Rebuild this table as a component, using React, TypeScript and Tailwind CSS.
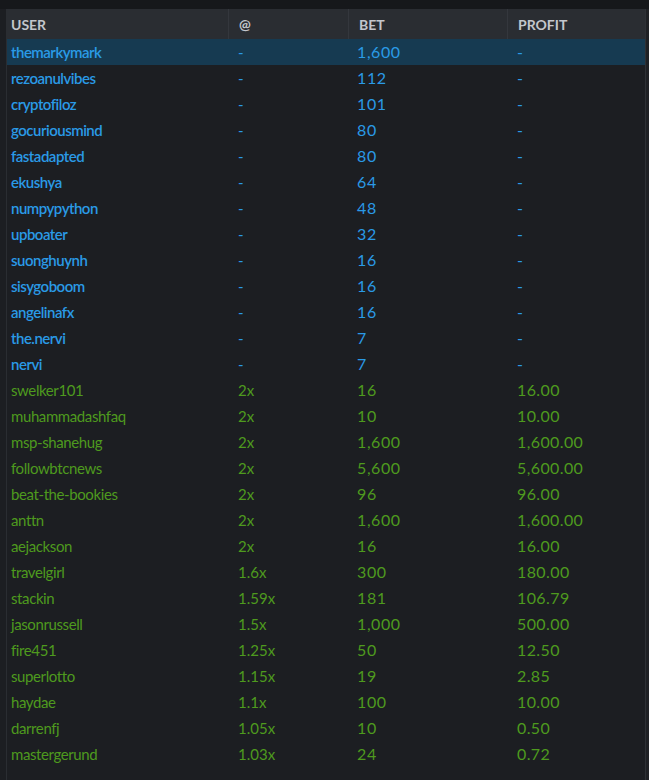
import React from "react";

type Row = { user: string; at: string; bet: string; profit: string; win: boolean };

const blue: [string, string][] = [
  ["themarkymark", "1,600"],
  ["rezoanulvibes", "112"],
  ["cryptofiloz", "101"],
  ["gocuriousmind", "80"],
  ["fastadapted", "80"],
  ["ekushya", "64"],
  ["numpypython", "48"],
  ["upboater", "32"],
  ["suonghuynh", "16"],
  ["sisygoboom", "16"],
  ["angelinafx", "16"],
  ["the.nervi", "7"],
  ["nervi", "7"],
];

const green: [string, string, string, string][] = [
  ["swelker101", "2x", "16", "16.00"],
  ["muhammadashfaq", "2x", "10", "10.00"],
  ["msp-shanehug", "2x", "1,600", "1,600.00"],
  ["followbtcnews", "2x", "5,600", "5,600.00"],
  ["beat-the-bookies", "2x", "96", "96.00"],
  ["anttn", "2x", "1,600", "1,600.00"],
  ["aejackson", "2x", "16", "16.00"],
  ["travelgirl", "1.6x", "300", "180.00"],
  ["stackin", "1.59x", "181", "106.79"],
  ["jasonrussell", "1.5x", "1,000", "500.00"],
  ["fire451", "1.25x", "50", "12.50"],
  ["superlotto", "1.15x", "19", "2.85"],
  ["haydae", "1.1x", "100", "10.00"],
  ["darrenfj", "1.05x", "10", "0.50"],
  ["mastergerund", "1.03x", "24", "0.72"],
];

const rows: Row[] = [
  ...blue.map(([user, bet]) => ({ user, at: "-", bet, profit: "-", win: false })),
  ...green.map(([user, at, bet, profit]) => ({ user, at, bet, profit, win: true })),
];

const App: React.FC = () => {
  return (
    <div className="w-[649px] h-[780px] bg-[#1c1e22] font-['Lato',sans-serif] overflow-hidden">
      <div className="h-[9px] bg-[#16181b]" />
      <div className="flex h-[771px]">
        <div className="w-[7px] border-r border-[#2a2d32]" />
        <div className="w-[638px]">
          <div className="grid grid-cols-[221px_120px_159px_138px] h-[30px] bg-[#2a2d32] text-[14px] font-bold text-[#c3c6cc]">
            <div className="pl-[4px] flex items-center">USER</div>
            <div className="pl-[10px] flex items-center border-l border-[#34373d]">@</div>
            <div className="pl-[10px] flex items-center border-l border-[#34373d]">BET</div>
            <div className="pl-[10px] flex items-center border-l border-[#34373d]">PROFIT</div>
          </div>
          {rows.map((r, i) => (
            <div
              key={r.user}
              className={`grid grid-cols-[221px_120px_159px_138px] h-[26px] items-center ${
                r.win ? "text-[#4e9a1e]" : "text-[#2a9ae6]"
              } ${i === 0 ? "bg-[#163a51]" : ""}`}
            >
              <div
                className={`pl-[4px] text-[15px] ${
                  r.win ? "tracking-[-0.4px]" : "font-semibold tracking-[-0.5px]"
                }`}
              >
                {r.user}
              </div>
              <div className="pl-[10px] text-[15px]">{r.at}</div>
              <div className="pl-[9px] text-[16px] tracking-[0.6px]">{r.bet}</div>
              <div className="pl-[10px] text-[16px] tracking-[0.4px]">{r.profit}</div>
            </div>
          ))}
        </div>
        <div className="w-[4px] border-l border-[#2e3136] bg-[#1f2125]" />
      </div>
    </div>
  );
};

export default App;
